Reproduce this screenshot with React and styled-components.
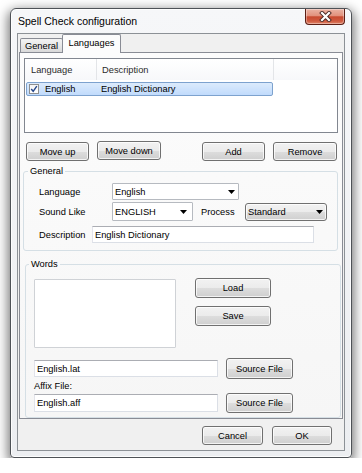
import React from 'react';
import styled, { createGlobalStyle } from 'styled-components';

const GlobalStyle = createGlobalStyle`
  html, body { margin: 0; padding: 0; background: #fff; }
  body {
    font-family: "Liberation Sans", Arial, sans-serif;
    font-size: 9.3px;
    color: #1b1b1b;
  }
  * { box-sizing: border-box; }
`;

const Window = styled.div`
  margin: 8px 0 0 10px;
  width: 342px;
  height: 450px;
  border: 1px solid #4e5257;
  border-radius: 6px 6px 4px 4px;
  background: linear-gradient(#f6f7f9, #eceef1);
  box-shadow: 0 4px 12px 2px rgba(0, 0, 0, 0.55), inset 0 0 0 1px rgba(255, 255, 255, 0.85);
  display: flex;
  flex-direction: column;
  padding: 0 6px 6px;
`;

const TitleBar = styled.div`
  height: 24px;
  flex-shrink: 0;
  display: flex;
  justify-content: space-between;
  align-items: flex-start;
`;

const Title = styled.div`
  align-self: center;
  margin-left: 1px;
  font-size: 10.5px;
  color: #000;
`;

const CloseButton = styled.div`
  width: 40px;
  height: 16px;
  border: 1px solid #5b1e14;
  border-top: none;
  border-radius: 0 0 4px 4px;
  background: linear-gradient(#eab3a4 0%, #e2917c 45%, #c84a30 52%, #cf5a3f 80%, #e0876b 100%);
  box-shadow: inset 0 0 0 1px rgba(255, 255, 255, 0.35);
  display: flex;
  align-items: center;
  justify-content: center;
`;

const Client = styled.div`
  flex: 1;
  background: #f0f0f0;
  border: 1px solid #8c9196;
  display: flex;
  flex-direction: column;
`;

const TabControl = styled.div`
  margin: 0 1px;
`;

const TabStrip = styled.div`
  height: 18px;
  display: flex;
  align-items: flex-end;
  padding-left: 1px;
`;

const Tab = styled.div`
  position: relative;
  z-index: ${p => (p.$active ? 1 : 0)};
  width: ${p => p.$w}px;
  height: ${p => (p.$active ? 19 : 14)}px;
  margin-left: ${p => (p.$active ? -1 : 0)}px;
  margin-bottom: ${p => (p.$active ? -1 : 0)}px;
  border: 1px solid #898c95;
  border-bottom: none;
  border-radius: 2px 2px 0 0;
  background: ${p => (p.$active ? '#fcfcfc' : 'linear-gradient(#f3f3f3, #e8e8e8 50%, #d9d9d9)')};
  display: flex;
  align-items: center;
  justify-content: center;
  padding-bottom: ${p => (p.$active ? 2 : 0)}px;
  color: #000;
`;

const Panel = styled.div`
  border: 1px solid #898c95;
  background: linear-gradient(#fcfcfc, #f6f6f6);
  padding-top: 5px;
  display: flex;
  flex-direction: column;
`;

const ListView = styled.div`
  margin: 0 4px;
  height: 75px;
  border: 1px solid #828790;
  background: #fff;
`;

const ListHeader = styled.div`
  height: 21px;
  display: flex;
  background: linear-gradient(#ffffff, #f7f8fa);
`;

const HeaderCell = styled.div`
  width: ${p => p.$w}px;
  padding-left: ${p => p.$pad}px;
  border-right: 1px solid #e3e5e8;
  display: flex;
  align-items: center;
  color: #2b2b2b;
`;

const HeaderFill = styled.div`
  flex: 1;
`;

const ListRow = styled.div`
  margin: 2px 0 0 1px;
  width: 247px;
  height: 14px;
  border: 1px solid #7da2ce;
  border-radius: 2px;
  background: linear-gradient(#dcebfc, #c1dbfc);
  display: flex;
  align-items: center;
`;

const RowCell = styled.div`
  width: ${p => (p.$w ? `${p.$w}px` : 'auto')};
  padding-left: ${p => p.$pad}px;
  display: flex;
  align-items: center;
  gap: 6px;
  color: #000;
`;

const CheckBox = styled.div`
  width: 10px;
  height: 10px;
  border: 1px solid #8e8f8f;
  background: linear-gradient(#f4f4f4, #ffffff);
  display: flex;
  align-items: center;
  justify-content: center;
`;

const ButtonRow = styled.div`
  margin-top: 9px;
  padding: 0 5px 0 6px;
  display: flex;
  gap: 8px;
`;

const Spacer = styled.div`
  flex: 1;
`;

const Button = styled.button`
  width: ${p => p.$w}px;
  height: ${p => p.$h || 19}px;
  margin-top: ${p => p.$dy || 0}px;
  padding: 0;
  font: inherit;
  color: #000;
  border: 1px solid #707070;
  border-radius: 3px;
  background: linear-gradient(#f2f2f2 0%, #ebebeb 50%, #dddddd 51%, #cfcfcf 100%);
  box-shadow: inset 0 0 0 1px rgba(255, 255, 255, 0.75);
  flex-shrink: 0;
`;

const GroupBox = styled.fieldset`
  margin: ${p => p.$m};
  padding: 0;
  min-width: 0;
  border: 1px solid #d5dfe5;
  border-radius: 3px;
`;

const Legend = styled.legend`
  margin-left: ${p => p.$off}px;
  padding: 0 2px;
  line-height: 11px;
  color: #000;
`;

const FormBody = styled.div`
  padding: 6px 0 7px 15px;
`;

const FormRow = styled.div`
  height: ${p => p.$h}px;
  margin-top: ${p => p.$mt || 0}px;
  display: flex;
  align-items: center;
`;

const Label = styled.div`
  width: ${p => p.$w}px;
  margin-left: ${p => p.$ml || 0}px;
  flex-shrink: 0;
  color: #000;
`;

const ComboBox = styled.div`
  width: ${p => p.$w}px;
  height: ${p => p.$h}px;
  flex-shrink: 0;
  border: 1px solid #b6bac0;
  border-radius: 1px;
  background: #fff;
  padding: 0 ${p => p.$rp}px 0 2px;
  display: flex;
  align-items: center;
  justify-content: space-between;
  color: #000;
`;

const DropList = styled(ComboBox)`
  border-color: #707070;
  border-radius: 3px;
  background: linear-gradient(#f2f2f2 0%, #ebebeb 50%, #dddddd 51%, #cfcfcf 100%);
  box-shadow: inset 0 0 0 1px rgba(255, 255, 255, 0.75);
`;

const TextField = styled.div`
  width: ${p => p.$w}px;
  height: ${p => p.$h}px;
  flex-shrink: 0;
  border: 1px solid #dbdfe6;
  border-top-color: #abadb3;
  border-left-color: #e2e3ea;
  background: #fff;
  padding-left: 2px;
  display: flex;
  align-items: center;
  color: #000;
`;

const WordsBody = styled.div`
  padding: 9px 0 4px 8px;
`;

const WordsTop = styled.div`
  display: flex;
  align-items: flex-start;
  gap: 19px;
`;

const ListBox = styled.div`
  width: 142px;
  height: 69px;
  border: 1px solid #cfd2d6;
  border-radius: 1px;
  background: #fff;
`;

const SideButtons = styled.div`
  margin-top: -1px;
  display: flex;
  flex-direction: column;
  gap: 8px;
`;

const FileRow = styled.div`
  margin-top: ${p => p.$mt}px;
  display: flex;
  align-items: center;
  gap: 8px;
`;

const SmallLabel = styled.div`
  margin-top: 2px;
  line-height: 11px;
  color: #000;
`;

const DialogButtons = styled.div`
  padding: 7px 12px 0 0;
  display: flex;
  justify-content: flex-end;
  gap: 9px;
`;

const Arrow = () => (
  <svg width="7" height="4" viewBox="0 0 7 4">
    <polygon points="0,0 7,0 3.5,4" fill="#000" />
  </svg>
);

const CloseGlyph = () => (
  <svg width="13" height="11" viewBox="0 0 13 11">
    <path d="M3 2 L10 9 M10 2 L3 9" stroke="#4a2a26" strokeWidth="4" strokeLinecap="square" />
    <path d="M3 2 L10 9 M10 2 L3 9" stroke="#ffffff" strokeWidth="2.2" strokeLinecap="square" />
  </svg>
);

const Tick = () => (
  <svg width="8" height="8" viewBox="0 0 8 8">
    <path d="M1.2 4 L3.2 6.3 L6.8 1.2" stroke="#24468a" strokeWidth="1.4" fill="none" />
  </svg>
);

export default function App() {
  return (
    <>
      <GlobalStyle />
      <Window>
        <TitleBar>
          <Title>Spell Check configuration</Title>
          <CloseButton>
            <CloseGlyph />
          </CloseButton>
        </TitleBar>
        <Client>
          <TabControl>
            <TabStrip>
              <Tab $w={43}>General</Tab>
              <Tab $w={59} $active>Languages</Tab>
            </TabStrip>
            <Panel>
              <ListView>
                <ListHeader>
                  <HeaderCell $w={72} $pad={6}>Language</HeaderCell>
                  <HeaderCell $w={177} $pad={5}>Description</HeaderCell>
                  <HeaderFill />
                </ListHeader>
                <ListRow>
                  <RowCell $w={69} $pad={2}>
                    <CheckBox><Tick /></CheckBox>
                    English
                  </RowCell>
                  <RowCell $pad={5}>English Dictionary</RowCell>
                </ListRow>
              </ListView>

              <ButtonRow>
                <Button $w={63}>Move up</Button>
                <Button $w={64} $dy={-1}>Move down</Button>
                <Spacer />
                <Button $w={63}>Add</Button>
                <Button $w={64}>Remove</Button>
              </ButtonRow>

              <GroupBox $m="5px 4px 0 3px">
                <Legend $off={4}>General</Legend>
                <FormBody>
                  <FormRow $h={17}>
                    <Label $w={73}>Language</Label>
                    <ComboBox $w={127} $h={17} $rp={3}>English<Arrow /></ComboBox>
                  </FormRow>
                  <FormRow $h={19} $mt={2}>
                    <Label $w={73}>Sound Like</Label>
                    <ComboBox $w={81} $h={19} $rp={5}>ENGLISH<Arrow /></ComboBox>
                    <Label $w={44} $ml={8}>Process</Label>
                    <DropList $w={82} $h={18} $rp={3}>Standard<Arrow /></DropList>
                  </FormRow>
                  <FormRow $h={17} $mt={5}>
                    <Label $w={53}>Description</Label>
                    <TextField $w={222} $h={17}>English Dictionary</TextField>
                  </FormRow>
                </FormBody>
              </GroupBox>

              <GroupBox $m="8px 1px 0 5px">
                <Legend $off={3}>Words</Legend>
                <WordsBody>
                  <WordsTop>
                    <ListBox />
                    <SideButtons>
                      <Button $w={76} $h={20}>Load</Button>
                      <Button $w={76} $h={20}>Save</Button>
                    </SideButtons>
                  </WordsTop>
                  <FileRow $mt={10}>
                    <TextField $w={184} $h={17}>English.lat</TextField>
                    <Button $w={67} $h={21}>Source File</Button>
                  </FileRow>
                  <SmallLabel>Affix File:</SmallLabel>
                  <FileRow $mt={1}>
                    <TextField $w={184} $h={18}>English.aff</TextField>
                    <Button $w={67} $h={20}>Source File</Button>
                  </FileRow>
                </WordsBody>
              </GroupBox>
            </Panel>
          </TabControl>
          <DialogButtons>
            <Button $w={61}>Cancel</Button>
            <Button $w={60}>OK</Button>
          </DialogButtons>
        </Client>
      </Window>
    </>
  );
}
